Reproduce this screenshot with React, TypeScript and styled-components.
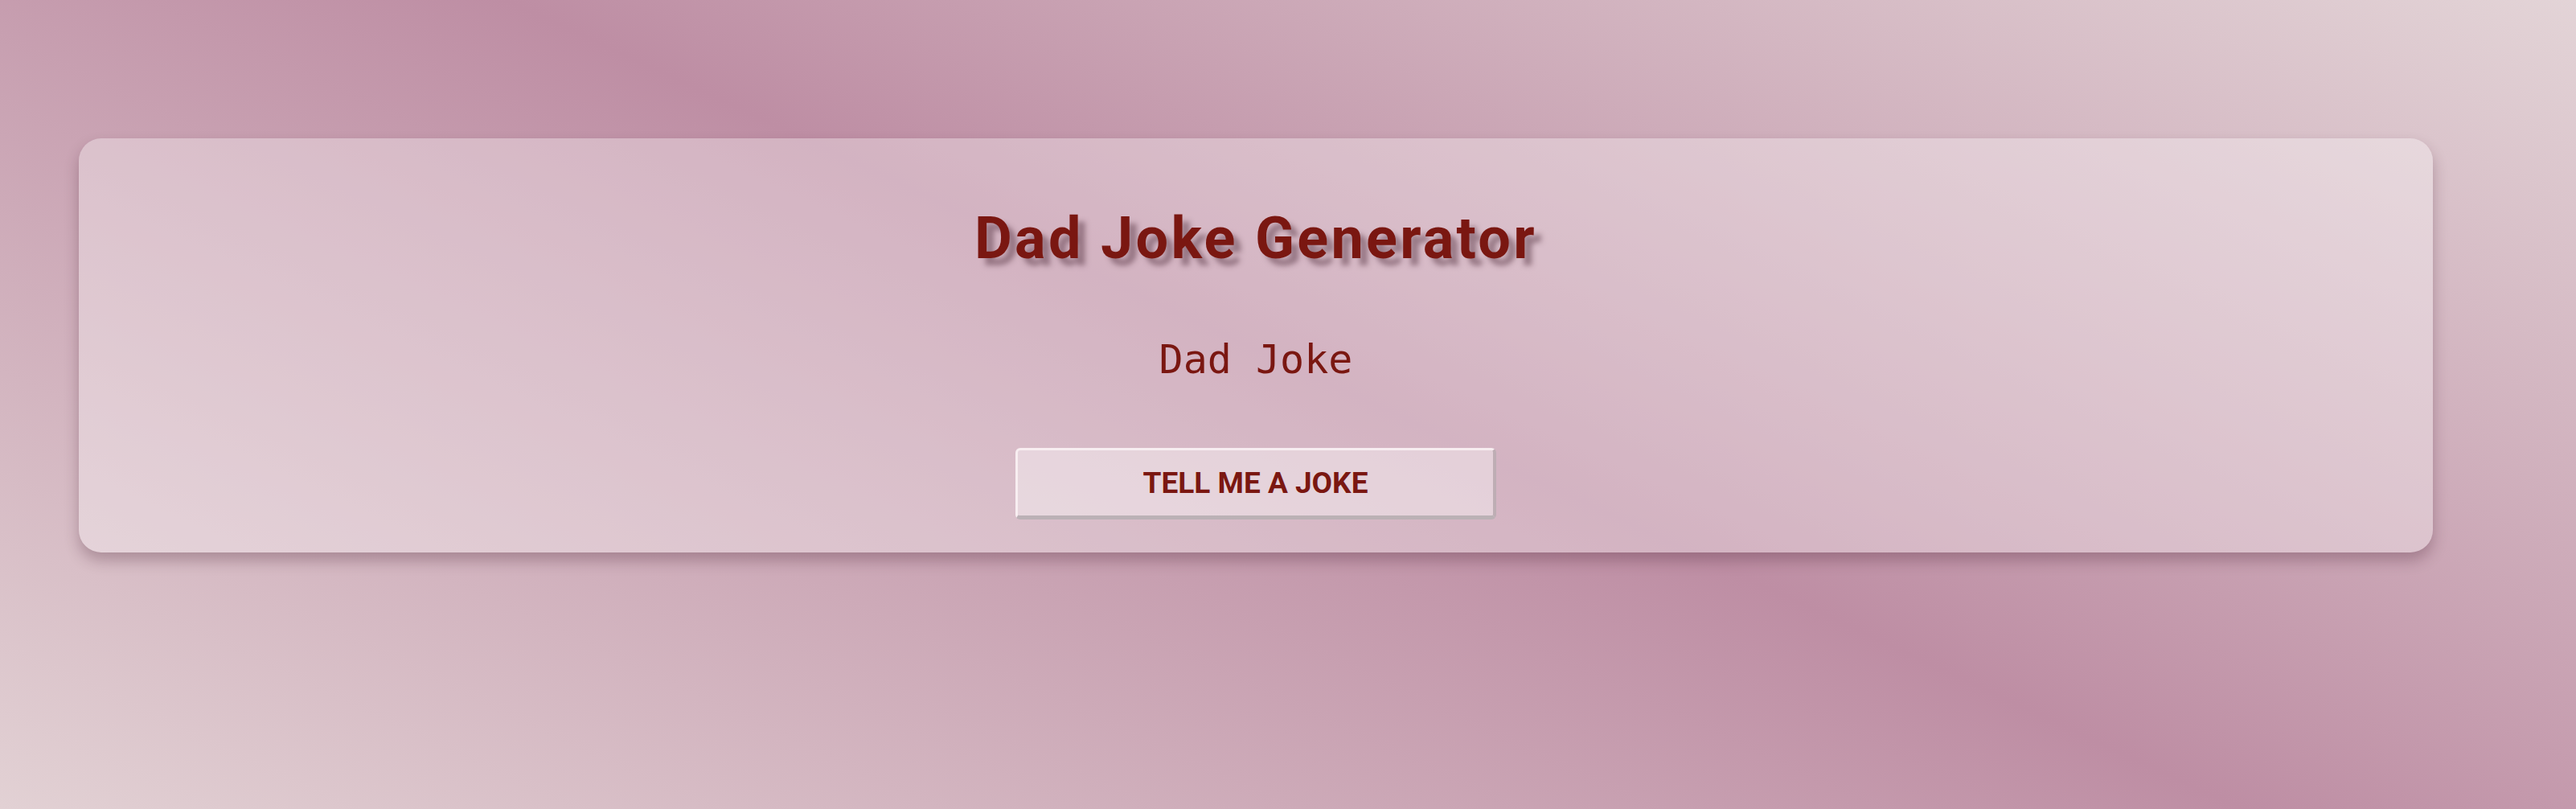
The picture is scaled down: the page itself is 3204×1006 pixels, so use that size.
import React from "react";
import styled, { createGlobalStyle } from "styled-components";

const GlobalStyle = createGlobalStyle`
    html, body {
        margin: 0;
        padding: 0;
    }
    body {
        font-family: Roboto, "Liberation Sans", sans-serif;
    }
`;

const Page = styled.div`
    min-height: 100vh;
    box-sizing: border-box;
    padding: 172px 178px 0 98px;
    background: linear-gradient(25deg, #e2d1d4 0%, #be8ea4 52%, #e3d4d7 100%);
`;

const Card = styled.div`
    display: flex;
    flex-direction: column;
    align-items: center;
    padding: 82px 0 41px;
    border-radius: 28px;
    background: rgba(255, 255, 255, 0.33);
    box-shadow: 0 10px 18px rgba(60, 20, 40, 0.28);
`;

const Title = styled.h1`
    margin: 0;
    font-family: Roboto, "Liberation Sans", sans-serif;
    font-weight: 700;
    font-size: 72px;
    letter-spacing: 3.3px;
    color: #7a1711;
    text-shadow: 9px 9px 6px rgba(90, 55, 70, 0.5);
`;

const Joke = styled.p`
    margin: 79px 0 0;
    font-family: "DejaVu Sans Mono", "Liberation Mono", monospace;
    font-size: 50px;
    color: #7a1711;
`;

const JokeButton = styled.button`
    margin-top: 81px;
    width: 598px;
    height: 89px;
    box-sizing: border-box;
    border-radius: 6px;
    border-style: solid;
    border-width: 3px 4px 5px 3px;
    border-color: rgba(250, 242, 245, 0.85) rgba(185, 170, 176, 0.9) rgba(185, 175, 180, 0.95) rgba(250, 242, 245, 0.85);
    background: rgba(255, 255, 255, 0.38);
    font-family: Roboto, "Liberation Sans", sans-serif;
    font-weight: 700;
    font-size: 37px;
    color: #7a1711;
    cursor: pointer;
`;

export default function App() {
    return (
        <>
            <GlobalStyle />
            <Page>
                <Card>
                    <Title>Dad Joke Generator</Title>
                    <Joke>Dad Joke</Joke>
                    <JokeButton>TELL ME A JOKE</JokeButton>
                </Card>
            </Page>
        </>
    );
}
